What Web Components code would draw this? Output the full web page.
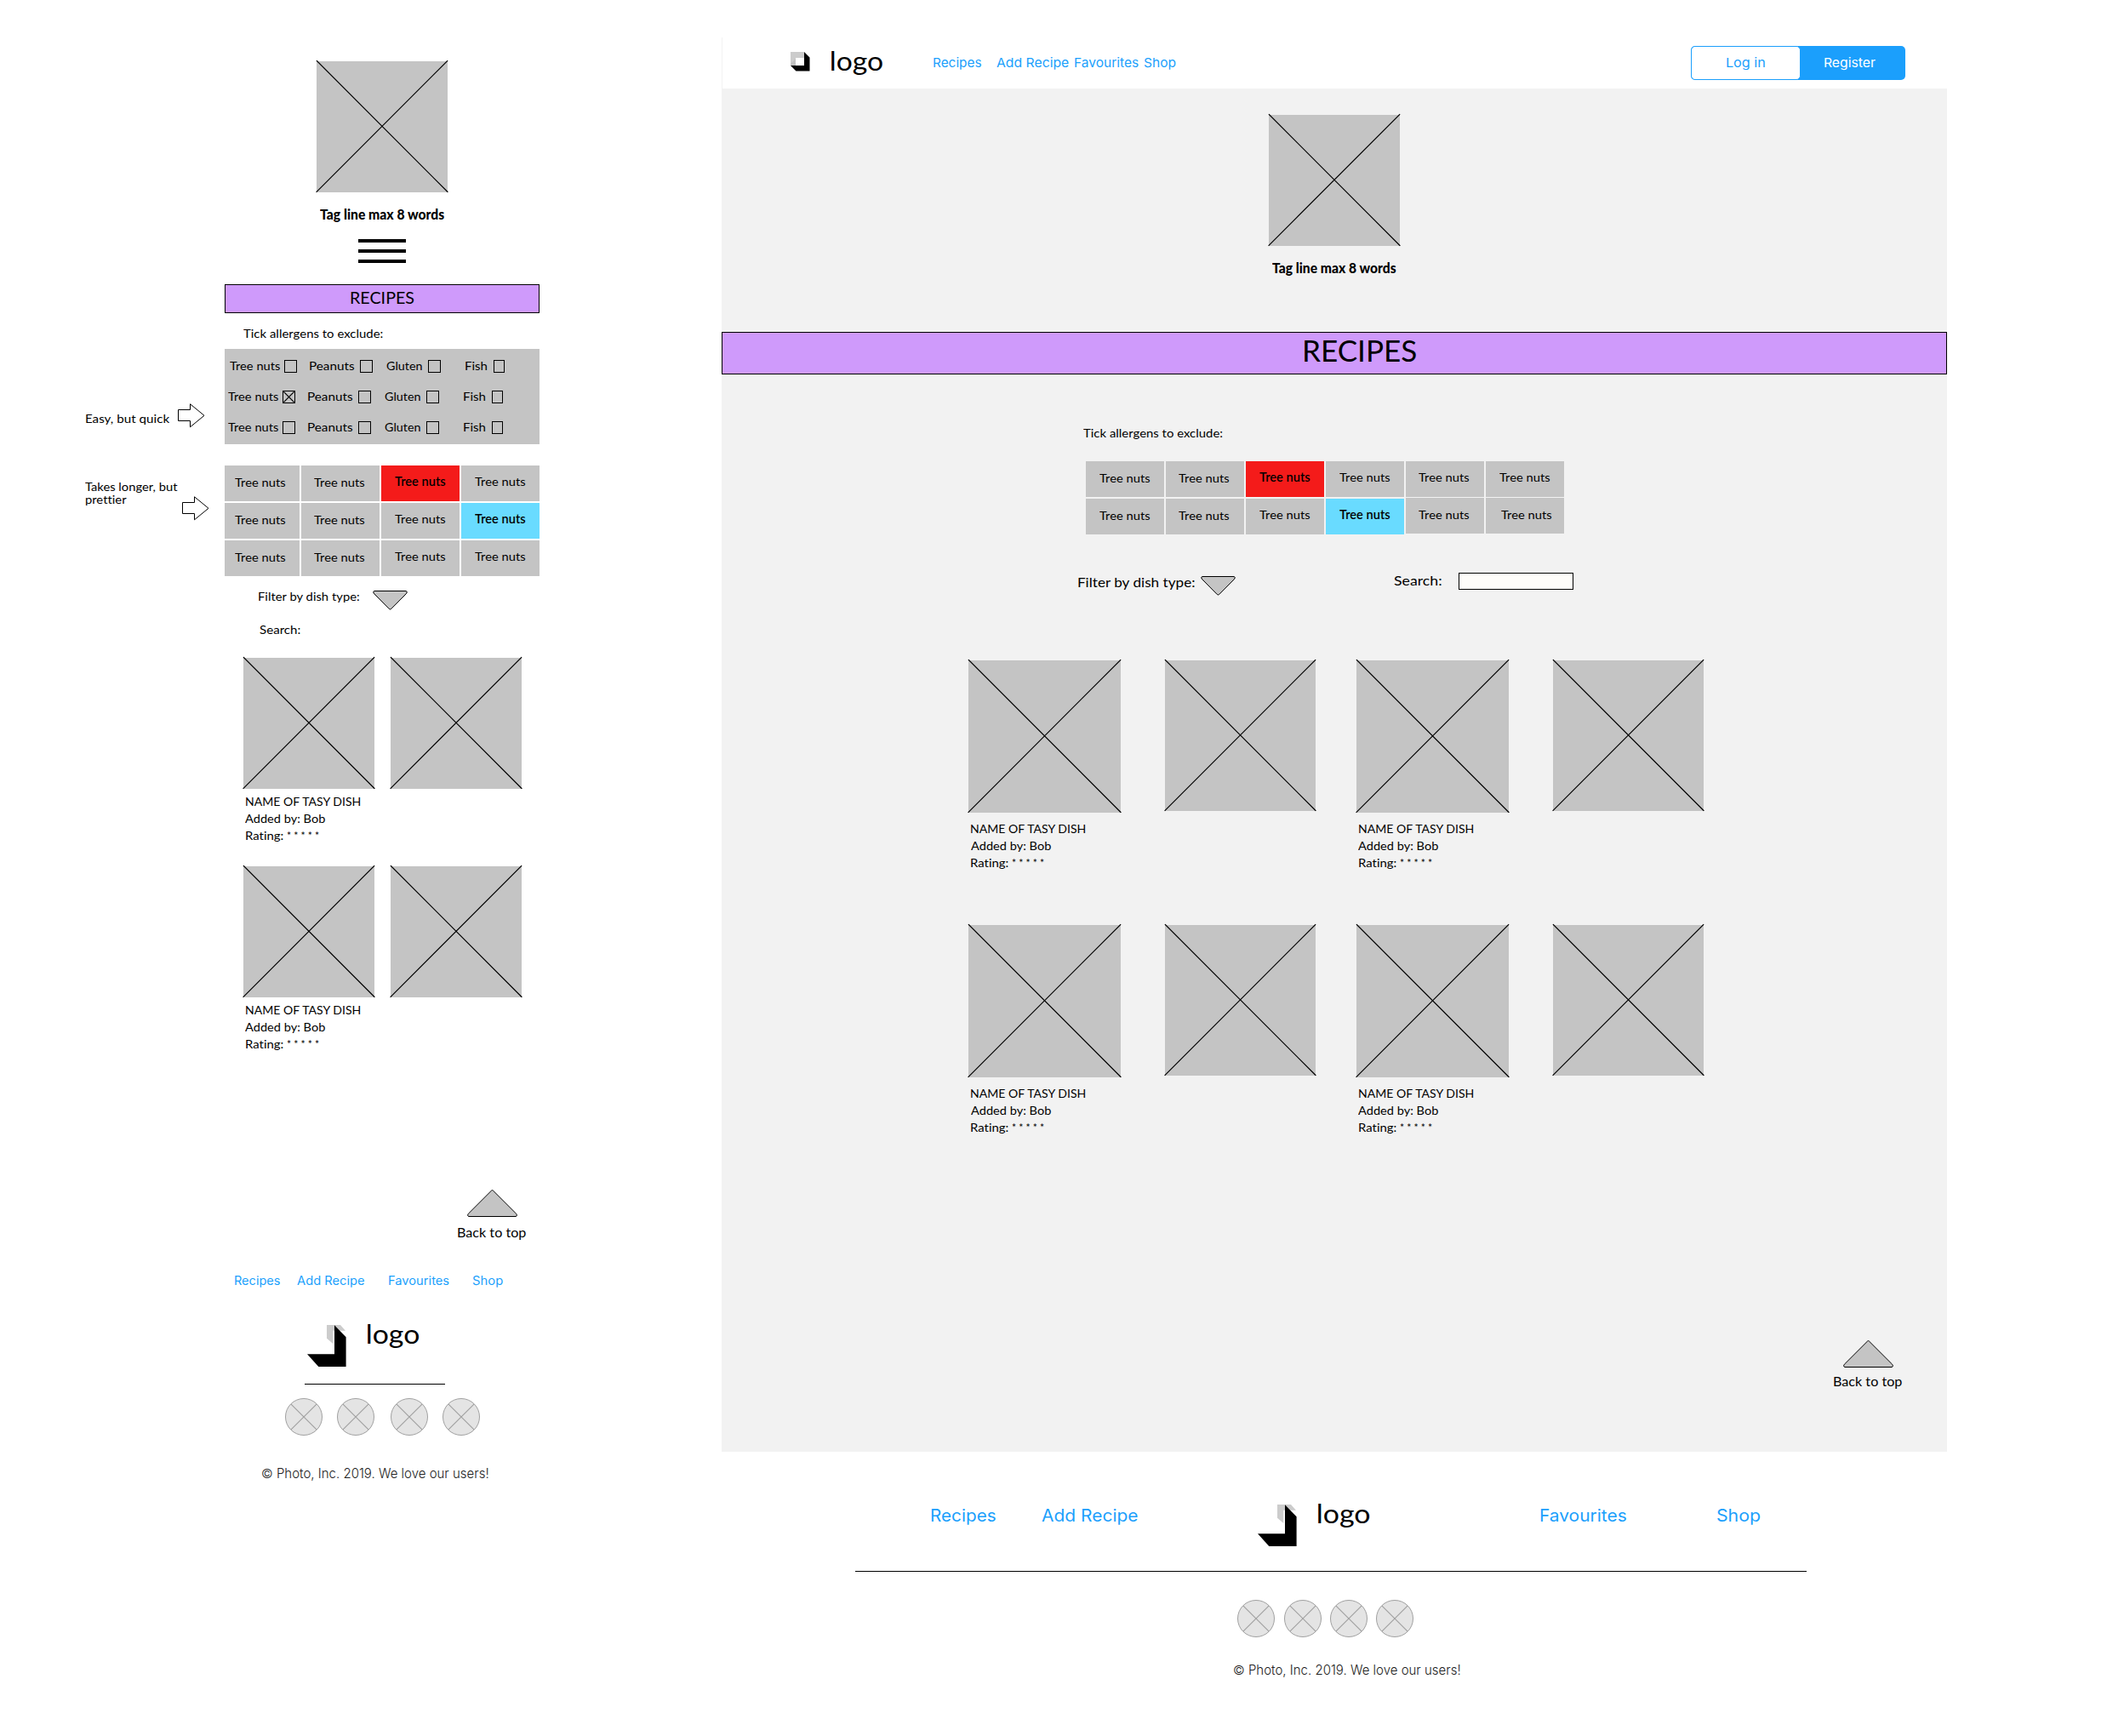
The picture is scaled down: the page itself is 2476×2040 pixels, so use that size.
<!DOCTYPE html>
<html lang="en">
<head>
<meta charset="utf-8">
<title>Recipes wireframe</title>
<style>
  html, body { margin: 0; background: #fff; color: #000; }
  body { font-family: Lato, "Liberation Sans", sans-serif; }
</style>
</head>
<body>
<recipe-wireframes></recipe-wireframes>
<script>
const FACES = {
  round: { family: 'Lato', ascent: .987, line: 1.2 },
  nav: { family: 'Inter', ascent: .96875, line: 1.21 }
};
const pen = document.createElement('canvas').getContext('2d');

class Base extends HTMLElement {
  connectedCallback() {
    if (!this.shadowRoot) this.attachShadow({ mode: 'open' }).innerHTML = this.view();
  }
  num(name, fallback = 0) { return this.hasAttribute(name) ? +this.getAttribute(name) : fallback; }
}

/* A one-line label whose ink spans exactly its own width. The hair of letter spacing turns ligatures off. */
customElements.define('fit-label', class extends Base {
  view() {
    const face = FACES[this.getAttribute('face') || 'round'];
    const size = this.num('size', 14), weight = this.num('weight', 400), w = this.num('w');
    pen.font = `${weight} ${size}px ${face.family}`;
    pen.letterSpacing = '0.02px';
    const m = pen.measureText(this.textContent);
    const k = w / (m.actualBoundingBoxLeft + m.actualBoundingBoxRight);
    return `<style>
      :host { display: block; flex: none; box-sizing: border-box; width: ${w}px; height: ${Math.round(size * face.line)}px;
        font: ${weight} ${size}px/${Math.round(size * face.line)}px ${face.family}, sans-serif; white-space: nowrap; letter-spacing: .02px; }
      span { display: inline-block; vertical-align: top; transform-origin: 0 0;
        transform: translateX(${m.actualBoundingBoxLeft * k}px) scaleX(${k}); }
    </style><span><slot></slot></span>`;
  }
});

customElements.define('photo-box', class extends Base {
  view() {
    const s = this.num('side');
    return `<style>:host{display:block;flex:none;width:${s}px;height:${s}px;background:#c4c4c4}svg{display:block;overflow:visible}</style>
    <svg width="${s}" height="${s}"><path d="M.3-.5L${s}${' '}${s - .5}M${s - .3}-.5L0 ${s - .5}" stroke="#000" stroke-width="1.15" stroke-linecap="square"/></svg>`;
  }
});

customElements.define('tick-box', class extends Base {
  view() {
    const w = this.num('w', 15);
    return `<style>:host{display:block;flex:none;width:${w}px;height:15px;box-sizing:border-box;border:1px solid #000}svg{display:block}</style>
    ${this.hasAttribute('checked') ? `<svg width="13" height="13"><path d="M0 0L13 13M13 0L0 13" stroke="#000" stroke-width="1.2"/></svg>` : ''}`;
  }
});

customElements.define('allergen-tile', class extends Base {
  view() {
    return `<style>:host{display:flex;flex:none;box-sizing:border-box;height:42px;width:${this.num('w')}px;background:${this.getAttribute('fill')};
      padding:${this.num('dy')}px 0 0 ${this.num('dx')}px}</style><slot></slot>`;
  }
});

customElements.define('note-arrow', class extends Base {
  view() {
    return `<style>:host{display:block;flex:none}svg{display:block;overflow:visible}</style>
    <svg width="32" height="29"><path d="M.5 7.5H14.5V.8L31 14.3L14.5 27.8V20.5H.5Z" fill="#fff" stroke="#000"/></svg>`;
  }
});

customElements.define('tri-icon', class extends Base {
  view() {
    const up = this.hasAttribute('up');
    return `<style>:host{display:block;flex:none}svg{display:block;overflow:visible}</style>` + (up
      ? `<svg width="59" height="32"><path d="M28.6 1Q29.5 .2 30.4 1L57.6 28.2Q59 29.7 58 31Q57.7 31.5 57 31.5H2Q1.3 31.5 1 31Q0 29.7 1.4 28.2Z" fill="#c4c4c4" stroke="#000"/></svg>`
      : `<svg width="41" height="23"><path d="M2 .5H39Q41.2 1 39.8 3.2L21.8 21.4Q20.5 22.8 19.2 21.4L1.2 3.2Q-.2 1 2 .5Z" fill="#c4c4c4" stroke="#000"/></svg>`);
  }
});

customElements.define('burger-icon', class extends Base {
  view() {
    return `<style>:host{display:flex;flex:none;flex-direction:column;gap:8px;width:56px}i{height:4px;background:#000}</style><i></i><i></i><i></i>`;
  }
});

customElements.define('cube-logo', class extends Base {
  view() {
    return `<style>:host{display:block;flex:none}svg{display:block;overflow:visible}</style>` + (this.hasAttribute('small')
      ? `<svg width="23" height="23"><path d="M0 0H16V7H6V16H0Z" fill="#ccc"/><path d="M0 16V14L6 8V16Z" fill="#c0c0c0"/><path d="M16 0L22.5 6.5V22.5H6.5L0 16H16Z"/></svg>`
      : `<svg width="46" height="49"><path d="M23 0H39L45 6.7H30.3V22L23 15.7Z" fill="#ccc"/><path d="M32 .3L45.6 14.3V49H13.3L0 34.3H32Z"/></svg>`);
  }
});

customElements.define('social-dot', class extends Base {
  view() {
    return `<style>:host{display:block;flex:none}svg{display:block}</style>
    <svg width="44" height="44"><circle cx="22" cy="22" r="21.5" fill="#e4e4e4" stroke="#a0a0a0"/><path d="M6.8 6.8L37.2 37.2M37.2 6.8L6.8 37.2" stroke="#a0a0a0" stroke-width="1.2"/></svg>`;
  }
});

customElements.define('auth-buttons', class extends Base {
  view() {
    return `<style>
      :host{display:flex;flex:none;box-sizing:border-box;width:252px;height:40px;border-radius:5px;background:#1b9ffc;color:#fff}
      .in{box-sizing:border-box;width:129px;height:40px;border:1px solid #1b9ffc;border-radius:5px;background:#fff;color:#1b9ffc;padding:10px 0 0 41.3px}
      .reg{padding:11px 0 0 28px}
    </style><div class="in"><slot name="in"></slot></div><div class="reg"><slot name="reg"></slot></div>`;
  }
});

/* ---- flow helpers: rows stacked in a column, items side by side in a row ---- */
const item = (x, y, w, h, html) => ({ x, y, w, h, html });
const place = (it, dx, dy) => it.html.replace(/^<([\w-]+)/, `<$1 style="margin:${+dy.toFixed(2)}px 0 0 ${+dx.toFixed(2)}px"`);
function stack(ox, oy, rows) {
  let cy = oy;
  return rows.map(items => {
    const top = Math.min(...items.map(i => i.y)), bottom = Math.max(...items.map(i => i.y + i.h));
    let cx = ox;
    const inner = items.map(i => { const s = place(i, i.x - cx, i.y - top); cx = i.x + i.w; return s; }).join('');
    const out = `<div class="row" style="margin-top:${top - cy}px;height:${bottom - top}px">${inner}</div>`;
    cy = bottom;
    return out;
  }).join('');
}
function label(text, x1, x2, baseline, size = 14.3, weight = 400, face = 'round', attrs = '') {
  const f = FACES[face], w = +(x2 - x1).toFixed(1);
  return item(x1, baseline - Math.round(size * f.ascent), w, Math.round(size * f.line),
    `<fit-label face="${face}" size="${size}" weight="${weight}" w="${w}" ${attrs}>${text}</fit-label>`);
}
const link = (t, x1, x2, b, s) => label(t, x1, x2, b, s, 400, 'nav', 'class="link"');
const photo = (x, y, side) => item(x, y, side, side, `<photo-box side="${side}"></photo-box>`);
const tick = (x, y, w = 15, on = '') => item(x, y, w, 15, `<tick-box w="${w}" ${on}></tick-box>`);
const GREY = '#c4c4c4', RED = '#f41b1a', CYAN = '#69dbff';
function tile(x, y, w, tx, baseline, fill = GREY) {
  const l = label('Tree nuts', tx, tx + 59.4, baseline, 14.3, fill === GREY ? 400 : 600);
  return item(x, y, w, 42, `<allergen-tile w="${w}" dx="${(tx - x).toFixed(1)}" dy="${l.y - y}" fill="${fill}">${l.html}</allergen-tile>`);
}
const box = (x, y, w, h, cls, rows, b = 0) => item(x, y, w, h, `<section class="${cls}">${stack(x + b, y + b, rows)}</section>`);
const cube = (x, y, a = '') => item(x, y, a ? 23 : 46, a ? 23 : 49, `<cube-logo ${a}></cube-logo>`);
const dots = (y, xs) => xs.map(x => item(x, y, 44, 44, '<social-dot></social-dot>'));
const tri = (x, y, up) => item(x, y, up ? 59 : 41, up ? 32 : 23, `<tri-icon ${up ? 'up' : ''}></tri-icon>`);
const rule = (x, y, w) => item(x, y, w, 1, '<div class="rule"></div>');
const meta = (xs, b) => [
  xs.map(x => label('NAME OF TASY DISH', x + .3, x + 136, b)),
  xs.map(x => label('Added by: Bob', x, x + 94.3, b + 20)),
  xs.flatMap(x => [label('Rating:', x + .3, x + 44, b + 40), label('* * * * *', x + 48.3, x + 86.3, b + 40)])
];
const tickRow = (x, y, on) => [
  label('Tree nuts', x, x + 59.2, y + 12), tick(x + 64.2, y, 15, on),
  label('Peanuts', x + 94.6, x + 147, y + 12), tick(x + 153.2, y),
  label('Gluten', x + 184.2, x + 226.7, y + 12), tick(x + 233.2, y),
  label('Fish', x + 277, x + 303, y + 12), tick(x + 310.2, y, 13)
];

const notes = stack(100, 0, [
  [label('Easy, but quick', 100.6, 199.5, 497), item(209, 474, 32, 29, '<note-arrow></note-arrow>')],
  [label('Takes longer, but', 100.3, 208.6, 577)],
  [label('prettier', 100.6, 149, 592), item(214, 583, 32, 29, '<note-arrow></note-arrow>')]
]);

const phone = stack(264, 0, [
  [photo(372, 72, 154)],
  [label('Tag line max 8 words', 375.7, 522, 258, 16.5, 900)],
  [item(421, 281, 56, 28, '<burger-icon></burger-icon>')],
  [box(264, 334, 370, 34, 'bar', [[label('RECIPES', 412, 486.3, 357, 19.8)]], 1)],
  [label('Tick allergens to exclude:', 285.5, 449.2, 397)],
  [box(264, 410, 370, 112, 'ticks', [tickRow(269.8, 423), tickRow(267.8, 459, 'checked'), tickRow(267.8, 495)])],
  ...[0, 1, 2].map(r => {
    const y = 547 + 44 * r;
    return [tile(264, y, 88, 276.4, y + 25), tile(354, y, 92, 369, y + 25),
      tile(448, y, 92, 464.3, y + 24, r === 0 ? RED : GREY), tile(542, y, 92, 558.3, y + 24, r === 1 ? CYAN : GREY)];
  }),
  [label('Filter by dish type:', 303.7, 422.5, 706), tri(438.5, 694)],
  [label('Search:', 304.5, 352.2, 745)],
  [photo(286, 773, 154), photo(459, 773, 154)],
  ...meta([288.3], 947),
  [photo(286, 1018, 154), photo(459, 1018, 154)],
  ...meta([288.3], 1192),
  [tri(549, 1398, 1)],
  [label('Back to top', 537.6, 618.3, 1454, 15.5)],
  [link('Recipes', 276.2, 329.3, 1510, 14), link('Add Recipe', 349.3, 428.7, 1510, 14), link('Favourites', 457, 527.7, 1510, 14), link('Shop', 554.7, 590.3, 1510, 14)],
  [cube(361, 1557), label('logo', 432, 493, 1579, 30.5)],
  [rule(358, 1626, 165)],
  dots(1643, [335, 396, 459, 520]),
  [label('© Photo, Inc. 2019. We love our users!', 308, 573.3, 1737, 15.4, 300, 'nav', 'class="copy"')]
]);

const header = stack(849, 44, [[
  cube(929, 61, 'small'), label('logo', 976.6, 1037.5, 83, 30.5),
  link('Recipes', 1096.6, 1153.4, 79, 14.8), link('Add Recipe', 1170.6, 1255.2, 79, 14.8),
  link('Favourites', 1263.2, 1338.6, 79, 14.8), link('Shop', 1344.3, 1382.2, 79, 14.8),
  item(1987, 54, 252, 40, `<auth-buttons>${link('Log in', 2029.3, 2074.3, 79, 14.8).html.replace('<fit-label', '<fit-label slot="in"')}${
    label('Register', 2144, 2204.3, 79, 14.8, 400, 'nav').html.replace('<fit-label', '<fit-label slot="reg"')}</auth-buttons>`)
]]);

const tileX = [1276, 1370, 1464, 1558, 1652, 1746], textX = [1292.2, 1385.3, 1480, 1574.3, 1667.3, 1762.4];
const main = stack(848, 104, [
  [photo(1491, 135, 154)],
  [label('Tag line max 8 words', 1495.3, 1641, 321, 16.5, 900)],
  [box(848, 390, 1440, 50, 'bar', [[label('RECIPES', 1533.3, 1664.3, 425, 33.8)]], 1)],
  [label('Tick allergens to exclude:', 1273.3, 1436.7, 514)],
  tileX.map((x, i) => tile(x, 542, 92, textX[i], i < 2 ? 567 : 566, i === 2 ? RED : GREY)),
  tileX.map((x, i) => tile(x, i > 3 ? 585 : 586, 92, textX[i] + (i === 5 ? 1.2 : 0), i < 2 ? 611 : 610, i === 3 ? CYAN : GREY)),
  [label('Filter by dish type:', 1267.3, 1404.5, 690, 16), tri(1411.5, 677), label('Search:', 1638, 1693.5, 688, 16),
    item(1714, 673, 135, 20, '<div class="field"></div>')],
  ...[0, 311].flatMap(d => [
    [photo(1138, 776 + d, 179), photo(1369, 776 + d, 177), photo(1594, 776 + d, 179), photo(1825, 776 + d, 177)],
    ...meta([1140.5, 1596.5], 979 + d)
  ]),
  [tri(2166, 1575, 1)],
  [label('Back to top', 2154.6, 2235.3, 1629, 15.5)]
]);

const footer = stack(848, 1706, [
  [link('Recipes', 1094.4, 1170.6, 1788, 19.8), link('Add Recipe', 1224, 1337, 1788, 19.8), cube(1478, 1768),
    label('logo', 1549, 1610.2, 1790, 30.5), link('Favourites', 1810.3, 1911.6, 1788, 19.8), link('Shop', 2017.7, 2068.6, 1788, 19.8)],
  [rule(1005, 1846, 1118)],
  dots(1880, [1454, 1509, 1563, 1617]),
  [label('© Photo, Inc. 2019. We love our users!', 1450, 1715.3, 1968, 15.4, 300, 'nav', 'class="copy"')]
]);

customElements.define('recipe-wireframes', class extends Base {
  view() {
    return `<style>
      :host { display: flex; align-items: flex-start; box-sizing: border-box; width: 2476px; height: 2040px; padding-left: 100px; overflow: hidden; }
      .col { display: flow-root; flex: none; }
      .row { display: flex; align-items: flex-start; }
      .notes { width: 164px; } .phone { width: 370px; } .desk { width: 1440px; margin-left: 214px; padding-top: 44px; }
      header, main { display: flow-root; box-sizing: border-box; }
      header { height: 60px; border-left: 1px solid #f2f2f2; }
      main { height: 1602px; background: #f2f2f2; }
      section { display: flow-root; flex: none; box-sizing: border-box; }
      .bar { border: 1px solid #000; background: #cf9afb; height: 34px; width: 100%; }
      main .bar { height: 50px; }
      .ticks { width: 370px; height: 112px; background: #c4c4c4; }
      .link { color: #1b9ffc; } .copy { color: #222; }
      .rule { flex: none; height: 1px; background: #000; width: 165px; }
      footer { display: flow-root; } footer .rule { width: 1118px; }
      .field { box-sizing: border-box; flex: none; width: 135px; height: 20px; border: 1px solid #000; background: #fefdfa; }
    </style>
    <aside class="col notes">${notes}</aside>
    <div class="col phone">${phone}</div>
    <div class="col desk"><header>${header}</header><main>${main}</main><footer>${footer}</footer></div>`;
  }
});
</script>
</body>
</html>
